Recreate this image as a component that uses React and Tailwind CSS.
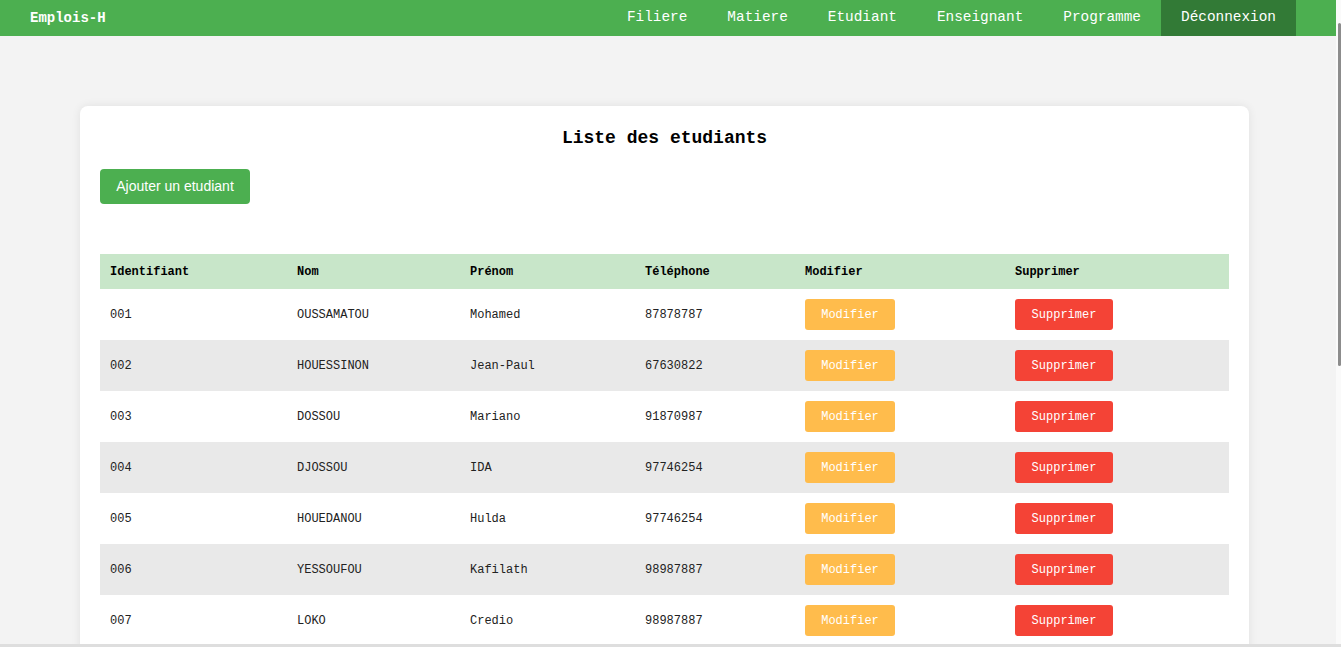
const etudiants = [
  { id: '001', nom: 'OUSSAMATOU', prenom: 'Mohamed', tel: '87878787' },
  { id: '002', nom: 'HOUESSINON', prenom: 'Jean-Paul', tel: '67630822' },
  { id: '003', nom: 'DOSSOU', prenom: 'Mariano', tel: '91870987' },
  { id: '004', nom: 'DJOSSOU', prenom: 'IDA', tel: '97746254' },
  { id: '005', nom: 'HOUEDANOU', prenom: 'Hulda', tel: '97746254' },
  { id: '006', nom: 'YESSOUFOU', prenom: 'Kafilath', tel: '98987887' },
  { id: '007', nom: 'LOKO', prenom: 'Credio', tel: '98987887' },
]

const links = ['Filiere', 'Matiere', 'Etudiant', 'Enseignant', 'Programme']

export default function App() {
  return (
    <div className="min-h-screen bg-[#f3f3f3] mr-[5px] font-['Liberation_Mono',monospace]">
      <nav className="flex items-center justify-between bg-[#4caf50] h-9 pl-[30px] pr-10 text-white">
        <span className="text-[14px] font-bold">Emplois-H</span>
        <ul className="flex h-full text-[14.4px]">
          {links.map(l => (
            <li key={l} className="px-5 flex items-center h-full">{l}</li>
          ))}
          <li className="px-5 flex items-center h-full bg-[#327a36]">Déconnexion</li>
        </ul>
      </nav>

      <div className="ml-20 mt-[70px] w-[1169px] bg-white rounded-lg shadow-[0_0_10px_rgba(0,0,0,0.08)] p-5">
        <h1 className="text-center text-[18px] font-bold text-black leading-6">Liste des etudiants</h1>
        <button className="mt-[19px] w-[150px] h-[35px] bg-[#4caf50] text-white rounded text-[14px] font-['Liberation_Sans',Arial,sans-serif]">
          Ajouter un etudiant
        </button>

        <table className="mt-[50px] w-full border-collapse text-[12px] text-[#222]">
          <colgroup>
            <col className="w-[187px]" />
            <col className="w-[173px]" />
            <col className="w-[175px]" />
            <col className="w-[160px]" />
            <col className="w-[210px]" />
            <col />
          </colgroup>
          <thead>
            <tr className="bg-[#c8e6c9] text-left text-black">
              <th className="px-[10px] h-[35px] font-bold">Identifiant</th>
              <th className="px-[10px] h-[35px] font-bold">Nom</th>
              <th className="px-[10px] h-[35px] font-bold">Prénom</th>
              <th className="px-[10px] h-[35px] font-bold">Téléphone</th>
              <th className="px-[10px] h-[35px] font-bold">Modifier</th>
              <th className="px-[10px] h-[35px] font-bold">Supprimer</th>
            </tr>
          </thead>
          <tbody>
            {etudiants.map((e, i) => (
              <tr key={e.id} className={i % 2 === 1 ? 'bg-[#e9e9e9]' : 'bg-white'}>
                <td className="px-[10px] h-[51px]">{e.id}</td>
                <td className="px-[10px] h-[51px]">{e.nom}</td>
                <td className="px-[10px] h-[51px]">{e.prenom}</td>
                <td className="px-[10px] h-[51px]">{e.tel}</td>
                <td className="px-[10px] h-[51px]">
                  <button className="w-[90px] h-[31px] bg-[#ffbc4c] text-white rounded-[3px]">Modifier</button>
                </td>
                <td className="px-[10px] h-[51px]">
                  <button className="w-[98px] h-[31px] bg-[#f44336] text-white rounded-[3px]">Supprimer</button>
                </td>
              </tr>
            ))}
          </tbody>
        </table>
      </div>

      {/* fake overlay scrollbar + bottom frame line */}
      <div className="fixed top-0 right-0 h-screen w-[5px] bg-[#fafafa]">
        <div className="absolute left-[2px] top-[23px] h-[343px] w-[3px] rounded-full bg-[#8c8c8c]" />
      </div>
      <div className="fixed bottom-0 left-0 right-0 h-[3px] bg-[#dedede]" />
    </div>
  )
}
